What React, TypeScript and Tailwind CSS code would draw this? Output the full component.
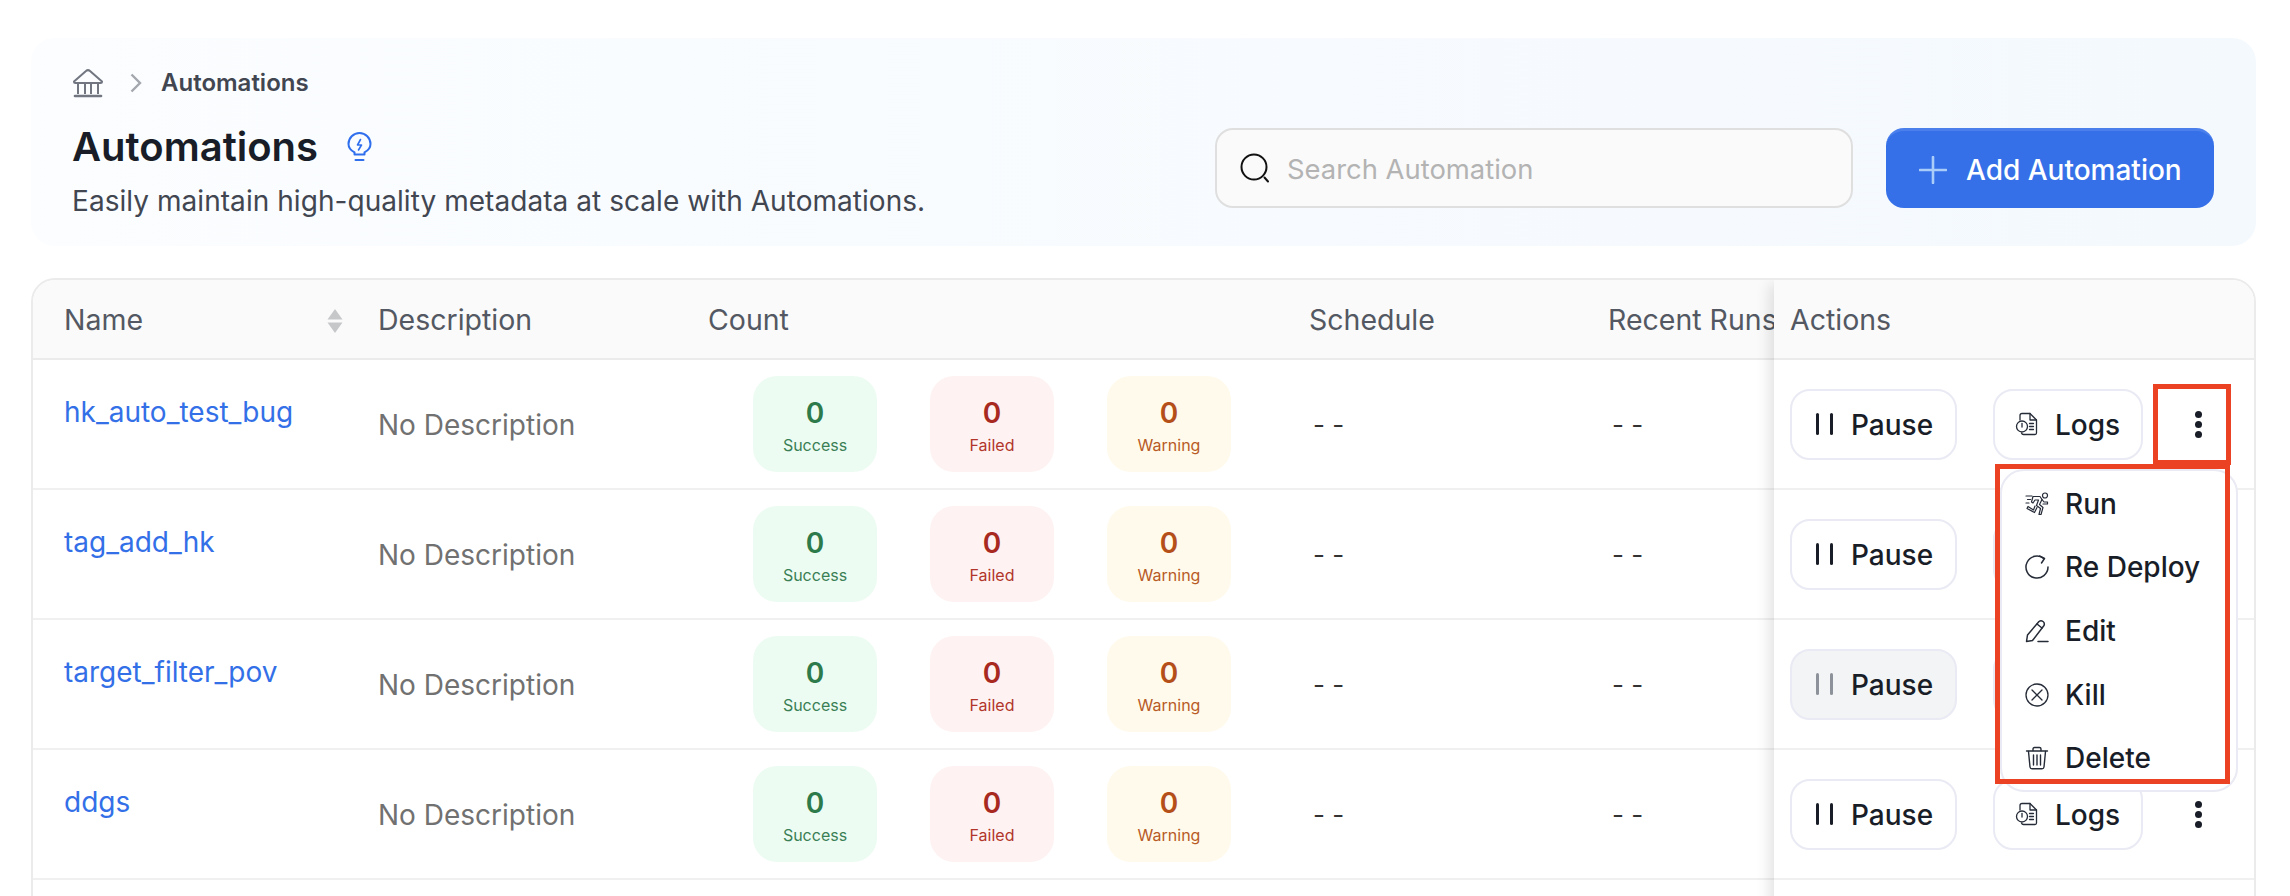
const rows = [
  { name: 'hk_auto_test_bug', hover: false, covered: false },
  { name: 'tag_add_hk', hover: false, covered: true },
  { name: 'target_filter_pov', hover: true, covered: true },
  { name: 'ddgs', hover: false, covered: false },
];

const tiles = [
  { label: 'Success', box: 'bg-[#edfcf2]', num: 'text-[#2d7a4b]', text: 'text-[#3a7f55]' },
  { label: 'Failed', box: 'bg-[#fef3f2]', num: 'text-[#a8291f]', text: 'text-[#b1352b]' },
  { label: 'Warning', box: 'bg-[#fffaeb]', num: 'text-[#b54f1a]', text: 'text-[#b85a26]' },
];

function BankIcon() {
  return (
    <svg width="32" height="30" viewBox="0 0 32 30" fill="none" stroke="#717680" strokeWidth="2" strokeLinejoin="round">
      <path d="M2 13.500 14 3a3 3 0 0 1 4 0l12 10.500Q30 15 28.500 15h-25Q2 15 2 13.500Z" />
      <path d="M6 15v11M13 15v11M19 15v11M26 15v11" />
      <path d="M3 28h26" strokeWidth="2.600" strokeLinecap="round" />
    </svg>
  );
}

function BulbIcon() {
  return (
    <svg width="25" height="30" viewBox="0 0 25 30" fill="none" stroke="#2f6fed" strokeWidth="2" strokeLinecap="round" strokeLinejoin="round">
      <path d="M7.500 22.500v-2.200C4 18.500 1.500 15.500 1.500 12a11 11 0 0 1 22 0c0 3.500-2.500 6.500-6 8.300v2.200Z" />
      <path d="M13.500 7.500 10.500 13h4l-3 5" strokeWidth="1.600" />
      <path d="M8.500 28h8" />
    </svg>
  );
}

function SearchIcon() {
  return (
    <svg width="30" height="30" viewBox="0 0 30 30" fill="none" stroke="#111" strokeWidth="2" strokeLinecap="round">
      <circle cx="14" cy="14" r="12.500" />
      <path d="M24.500 24.500 28 28.500" />
    </svg>
  );
}

function PlusIcon() {
  return (
    <svg width="28" height="28" viewBox="0 0 28 28" fill="none" stroke="#a9ccf9" strokeWidth="2.600" strokeLinecap="round">
      <path d="M14 1v26M1 14h26" />
    </svg>
  );
}

function PauseIcon({ muted }: { muted: boolean }) {
  const bar = muted ? 'bg-[#8d9199]' : 'bg-[#181d27]';
  return (
    <span className="flex h-[22px] items-stretch gap-[11px]">
      <span className={`w-[3px] rounded-full ${bar}`} />
      <span className={`w-[3px] rounded-full ${bar}`} />
    </span>
  );
}

function LogsIcon() {
  return (
    <svg width="24" height="24" viewBox="0 0 24 24" fill="none" stroke="#252b37" strokeWidth="1.300" strokeLinecap="round" strokeLinejoin="round">
      <path d="M5 8V3.500Q5 1.500 7 1.500h8l6.500 6.500v13q0 1.500-1.500 1.500H8.500Q7 22.500 6.500 21" />
      <path d="M15 1.500V8h6.500" />
      <circle cx="7" cy="14.500" r="5.500" />
      <path d="M7 11.500v3.500" />
      <path d="M14.500 11.500h4M14.500 14.500h4M14.500 17.500h4" />
    </svg>
  );
}

function KebabIcon() {
  return (
    <span className="flex flex-col gap-[3px]">
      <span className="size-[7px] rounded-full bg-[#181d27]" />
      <span className="size-[7px] rounded-full bg-[#181d27]" />
      <span className="size-[7px] rounded-full bg-[#181d27]" />
    </span>
  );
}

function RunIcon() {
  return (
    <svg width="24" height="24" viewBox="0 0 24 24" fill="none" stroke="#252b37" strokeWidth="1.200" strokeLinecap="round" strokeLinejoin="round">
      <circle cx="20" cy="3.500" r="2.500" />
      <path d="M1 4h6M2.500 7.500h3M1 11h3" />
      <path d="M8 4.500h7l2 3-2.500 5 3.500 3-2 7h-2l1.500-6-4-3 2-5.500H10l-2 3-1.500-1Z" />
      <path d="M17 7.500 19 10h3.500v2H18" />
      <path d="M10 14 8.500 18 3 14.500l-1 2 7.500 4 2.500-5" />
    </svg>
  );
}

function RedeployIcon() {
  return (
    <svg width="24" height="24" viewBox="0 0 24 24" fill="none" stroke="#252b37" strokeWidth="1.500" strokeLinecap="round" strokeLinejoin="round">
      <path d="M19 3.600A11 11 0 1 0 23 12" />
      <path d="M14.500 1 19.500 3.500 16.500 8" />
    </svg>
  );
}

function EditIcon() {
  return (
    <svg width="24" height="24" viewBox="0 0 24 24" fill="none" stroke="#252b37" strokeWidth="1.500" strokeLinecap="round" strokeLinejoin="round">
      <path d="M1.500 22.500 2.500 16 14 2.500q2-1.500 4 0t1 4L7.500 21.500Z" />
      <path d="M12 5l5 4" />
      <path d="M13 22.500h10" />
    </svg>
  );
}

function KillIcon() {
  return (
    <svg width="24" height="24" viewBox="0 0 24 24" fill="none" stroke="#252b37" strokeWidth="1.300" strokeLinecap="round">
      <circle cx="12" cy="12" r="11" />
      <path d="M7 7l10 10M17 7 7 17" />
    </svg>
  );
}

function TrashIcon() {
  return (
    <svg width="24" height="24" viewBox="0 0 24 24" fill="none" stroke="#252b37" strokeWidth="1.400" strokeLinecap="round" strokeLinejoin="round">
      <path d="M1.500 5h21" />
      <path d="M8 4.500V3q0-1.500 1.500-1.500h5Q16 1.500 16 3v1.500" />
      <path d="M3.500 5.500 5 21q.2 1.800 2 1.800h10q1.800 0 2-1.800l1.500-15.500" />
      <path d="M8.500 9v10M12 9v10M15.500 9v10" />
    </svg>
  );
}

const menuItems = [
  { label: 'Run', icon: <RunIcon /> },
  { label: 'Re Deploy', icon: <RedeployIcon /> },
  { label: 'Edit', icon: <EditIcon /> },
  { label: 'Kill', icon: <KillIcon /> },
  { label: 'Delete', icon: <TrashIcon /> },
];

function SortIcon() {
  return (
    <svg width="16" height="24" viewBox="0 0 16 24" fill="#c6c7c9">
      <path d="M8 0l7.500 10.500H.5Z" />
      <path d="M8 24 .5 13.500h15Z" />
    </svg>
  );
}

function ActionButton({ children, muted }: { children: React.ReactNode; muted?: boolean }) {
  return (
    <button
      type="button"
      className={`flex h-[71px] items-center rounded-[20px] border-2 border-[#e9eaf3] text-[28px] leading-none font-medium text-[#181d27] ${muted ? 'bg-[#f3f4f5]' : 'bg-white'}`}
    >
      {children}
    </button>
  );
}

export default function App() {
  return (
    <div className="relative h-[896px] overflow-hidden bg-white pt-[38px] pr-[34px] pl-[31px] font-['Inter',sans-serif]">
      <header className="flex h-[208px] items-end justify-between rounded-[24px] bg-gradient-to-r from-[#fbfdff] to-[#f4f9fe] pr-[42px] pb-[38px] pl-[41px]">
        <div className="self-start pt-[30px]">
          <nav className="flex items-center">
            <BankIcon />
            <svg width="14" height="20" viewBox="0 0 14 20" fill="none" stroke="#a4a7ae" strokeWidth="2.400" className="ml-[25px]">
              <path d="M2.500 1.500 11 10l-8.500 8.500" />
            </svg>
            <span className="ml-[18px] text-[24px] leading-[30px] font-semibold text-[#414651]">Automations</span>
          </nav>
          <div className="mt-[21px] flex items-center gap-[29px]">
            <h1 className="text-[40px] leading-[56px] font-semibold text-[#181d27]">Automations</h1>
            <BulbIcon />
          </div>
          <p className="mt-[6px] text-[28px] leading-[40px] tracking-[0.05px] text-[#414651]">
            Easily maintain high-quality metadata at scale with Automations.
          </p>
        </div>
        <div className="flex gap-[33px]">
          <label className="flex h-[80px] w-[638px] items-center gap-[17px] rounded-[18px] border-2 border-[#dfdfdf] bg-[#fafafa] pl-[23px]">
            <SearchIcon />
            <span className="pt-[3px] text-[27.400px] text-[#b3b3b3]">Search Automation</span>
          </label>
          <button
            type="button"
            className="flex h-[80px] w-[328px] items-center gap-[19px] rounded-[18px] border-t-[3px] border-[#4a7fec] bg-[#3570e8] pl-[33px] text-[28px] font-medium text-white"
          >
            <PlusIcon />
            Add Automation
          </button>
        </div>
      </header>

      <section className="mt-[32px] flex h-[700px] overflow-hidden rounded-t-[24px] border-2 border-[#ebebeb]">
        <div className="w-[1741px] shrink-0">
          <div className="flex h-[80px] items-center border-b-2 border-[#ebebeb] bg-[#fafafa] pt-[3px] text-[28.500px] text-[#535862]">
            <div className="flex w-[313px] items-center justify-between pr-[3px] pl-[31px]">
              Name
              <SortIcon />
            </div>
            <div className="w-[331px] pl-[32px]">Description</div>
            <div className="w-[600px] pl-[31px]">Count</div>
            <div className="w-[299px] pl-[32px]">Schedule</div>
            <div className="w-[198px] overflow-hidden pl-[32px] whitespace-nowrap">Recent Runs</div>
          </div>
          {rows.map((row) => (
            <div key={row.name} className="flex h-[130px] items-center border-b-2 border-[#f0f0f0]">
              <div className="w-[313px] self-start pt-[34px] pl-[31px] text-[28px] leading-[36px] text-[#3370e8]">{row.name}</div>
              <div className="w-[331px] pt-[2px] pl-[32px] text-[28px] text-[#717171]">No Description</div>
              <div className="flex w-[600px] gap-[53px] pl-[76px]">
                {tiles.map((tile) => (
                  <div key={tile.label} className={`flex h-[96px] w-[124px] flex-col items-center rounded-[24px] pt-[20px] ${tile.box}`}>
                    <span className={`text-[28px] leading-[34px] font-semibold ${tile.num}`}>0</span>
                    <span className={`mt-[4px] text-[16px] leading-[22px] ${tile.text}`}>{tile.label}</span>
                  </div>
                ))}
              </div>
              <div className="w-[299px] pl-[36px] text-[26px] text-[#333]">- -</div>
              <div className="w-[198px] pl-[36px] text-[26px] text-[#333]">- -</div>
            </div>
          ))}
        </div>

        <div className="relative z-10 flex-1 bg-white shadow-[-8px_0_14px_-4px_rgba(0,0,0,0.12)]">
          <div className="flex h-[80px] items-center border-b-2 border-[#ebebeb] bg-[#fafafa] pt-[3px] pl-[16px] text-[28.500px] text-[#535862]">Actions</div>
          {rows.map((row) => (
            <div key={row.name} className="flex h-[130px] items-center border-b-2 border-[#f0f0f0] pl-[16px]">
              <ActionButton muted={row.hover}>
                <span className="flex w-[163px] items-center gap-[18px] pl-[24px]">
                  <PauseIcon muted={row.hover} />
                  <span className="pt-[2px]">Pause</span>
                </span>
              </ActionButton>
              <span className="ml-[36px]">
                <ActionButton>
                  {row.covered ? (
                    <span className="block w-[146px]" />
                  ) : (
                    <span className="flex w-[146px] items-center gap-[16px] pl-[20px]">
                      <LogsIcon />
                      <span className="pt-[2px]">Logs</span>
                    </span>
                  )}
                </ActionButton>
              </span>
              {!row.covered && (
                <span className="ml-[52px]">
                  <KebabIcon />
                </span>
              )}
            </div>
          ))}
        </div>
      </section>

      <div className="absolute top-[469px] left-[2000px] z-20 flex h-[323px] w-[238px] flex-col rounded-[24px] border-2 border-[#e9eaf3] bg-white pt-[1px]">
        {menuItems.map((item) => (
          <div key={item.label} className="flex h-[64.600px] items-center gap-[16px] pl-[23px] text-[28px] font-medium text-[#181d27]">
            {item.icon}
            {item.label}
          </div>
        ))}
      </div>

      {/* annotation boxes drawn over the screenshot */}
      <div className="absolute top-[384px] left-[2153px] z-30 h-[81px] w-[78px] border-[5px] border-[#ec4224]" />
      <div className="absolute top-[464px] left-[1995px] z-30 h-[320px] w-[235px] border-[5px] border-[#ec4224]" />
    </div>
  );
}
